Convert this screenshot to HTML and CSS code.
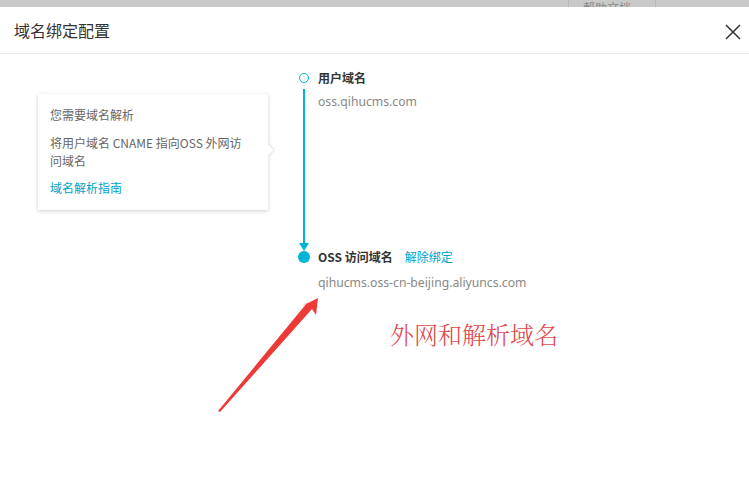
FILE: index.html
```html
<!DOCTYPE html>
<html lang="zh-CN">
<head>
<meta charset="utf-8">
<title>域名绑定配置</title>
<link rel="stylesheet" href="styles.css">
</head>
<body>
<div class="backdrop">
  <div class="backdrop-tab">帮助文档</div>
</div>
<div class="modal">
  <div class="modal-header">
    <span class="modal-title">域名绑定配置</span>
    <svg class="close" width="16" height="16" viewBox="0 0 16 16"><path d="M1 1L15 15M15 1L1 15" stroke="#333" stroke-width="1.5" fill="none"/></svg>
  </div>
  <div class="modal-body">
    <div class="popover">
      <p class="pop-line">您需要域名解析</p>
      <p class="pop-line pop-gap">将用户域名 CNAME 指向OSS 外网访问域名</p>
      <a class="pop-link">域名解析指南</a>
      <span class="pop-arrow"></span>
    </div>
    <div class="timeline">
      <div class="tl-icon"><span class="dot-hollow"></span></div>
      <div class="tl-title">用户域名</div>
      <div class="tl-icon tl-connector"><span class="line"></span><span class="arrow"></span></div>
      <div class="tl-value">oss.qihucms.com</div>
      <div class="tl-icon"><span class="dot-filled"></span></div>
      <div class="tl-title">OSS 访问域名<a class="unbind">解除绑定</a></div>
      <div class="tl-icon"></div>
      <div class="tl-value tl-value2">qihucms.oss-cn-beijing.aliyuncs.com</div>
    </div>
  </div>
  <div class="note">外网和解析域名</div>
  <svg class="note-arrow" width="749" height="480" viewBox="0 0 749 480">
    <path d="M218 411 L307 303 L302 306 L318 298 L316 315 L312 309 L220 412 Z" fill="#ee3a36"/>
  </svg>
</div>
</body>
</html>
```

FILE: styles.css
```css
html, body {
  margin: 0;
  padding: 0;
  background: #fff;
  width: 749px;
  height: 480px;
  overflow: hidden;
  font-family: "Noto Sans", "Noto Sans CJK SC", sans-serif;
}
.backdrop {
  height: 7px;
  background: #c9c9c9;
  position: relative;
  overflow: hidden;
}
.backdrop-tab {
  position: absolute;
  left: 568px;
  top: 0;
  width: 88px;
  height: 7px;
  border-left: 1px solid #b8b8b8;
  border-right: 1px solid #b8b8b8;
  font-size: 12px;
  line-height: 12px;
  color: #8a8a8a;
  text-indent: 14px;
  padding-top: 3px;
  box-sizing: border-box;
  overflow: hidden;
}
.modal {
  position: relative;
  height: 473px;
}
.modal-header {
  height: 47px;
  border-bottom: 1px solid #e8e8e8;
  display: flex;
  align-items: center;
  justify-content: space-between;
  padding: 0 8px 0 14px;
  box-sizing: border-box;
}
.modal-title {
  font-size: 16px;
  color: #333;
  font-family: "Noto Sans CJK SC", sans-serif;
  margin-top: 0;
}
.close {
  margin-top: 4px;
}
.modal-body {
  display: flex;
  align-items: flex-start;
  padding-left: 38px;
}
.popover {
  position: relative;
  width: 230px;
  height: 116px;
  margin-top: 40px;
  box-sizing: border-box;
  padding: 12px 12px 0 12px;
  background: #fff;
  box-shadow: 0 1px 4px rgba(0,0,0,0.2);
  font-size: 12px;
  line-height: 18px;
  color: #666;
  font-family: "Noto Sans CJK SC", sans-serif;
}
.pop-line {
  margin: 0;
}
.pop-gap {
  margin-top: 10px;
  width: 200px;
}
.pop-link {
  display: block;
  margin-top: 9px;
  color: #00a3cc;
}
.pop-arrow {
  position: absolute;
  right: -4px;
  top: 52px;
  width: 8px;
  height: 8px;
  background: #fff;
  transform: rotate(45deg);
  box-shadow: 1px -1px 2px rgba(0,0,0,0.12);
}
.timeline {
  margin-left: 29px;
  margin-top: 15px;
  display: grid;
  grid-template-columns: 14px auto;
  grid-template-rows: 18px 161px 18px auto;
  column-gap: 7px;
  font-size: 12px;
  line-height: 18px;
}
.tl-icon {
  display: flex;
  flex-direction: column;
  align-items: center;
  justify-content: center;
}
.dot-hollow {
  width: 8px;
  height: 8px;
  border: 1.5px solid #00b4d6;
  border-radius: 50%;
}
.tl-connector {
  justify-content: flex-start;
  padding-top: 2px;
}
.line {
  flex: 1;
  width: 1.5px;
  background: #00b4d6;
}
.arrow {
  width: 0;
  height: 0;
  border-left: 5px solid transparent;
  border-right: 5px solid transparent;
  border-top: 8px solid #00b4d6;
  margin-bottom: -3px;
}
.dot-filled {
  width: 12px;
  height: 12px;
  border-radius: 50%;
  background: #00b4d6;
}
.tl-title {
  font-weight: bold;
  color: #333;
  font-family: "Noto Sans CJK SC", sans-serif;
  white-space: nowrap;
}
.unbind {
  font-weight: normal;
  color: #00a3cc;
  margin-left: 12px;
}
.tl-value {
  color: #888;
  margin-top: 6px;
  font-family: "Noto Sans", "Noto Sans CJK SC", sans-serif;
  font-size: 12.2px;
}
.tl-value2 {
  margin-top: 8px;
}
.note {
  position: absolute;
  left: 390px;
  top: 310px;
  font-size: 24px;
  line-height: 34px;
  color: #e0484c;
  font-family: "Noto Serif CJK SC", "Noto Sans CJK SC", serif;
  font-weight: 300;
}
.note-arrow {
  position: absolute;
  left: 0;
  top: -7px;
}
```
